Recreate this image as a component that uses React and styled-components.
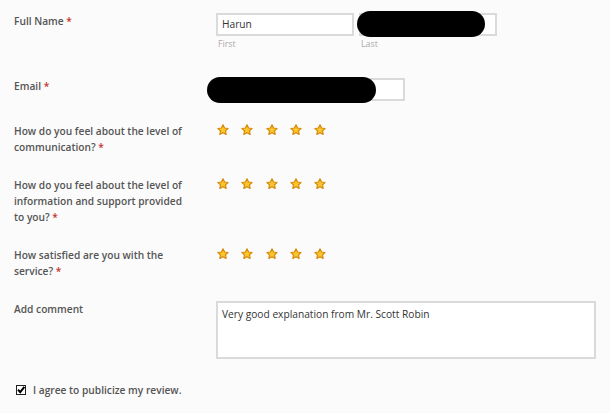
import React from "react";
import styled, { createGlobalStyle } from "styled-components";

const Global = createGlobalStyle`
  html, body { margin: 0; padding: 0; background: #fbfbfb; }
  body { font-family: "Open Sans", "Noto Sans", sans-serif; }
`;

const Form = styled.div`
  width: 610px;
  height: 413px;
  box-sizing: border-box;
  padding: 13px 0 0 14px;
  background: #fbfbfb;
  overflow: hidden;
`;

const Row = styled.div`
  display: grid;
  grid-template-columns: 202px 1fr;
  margin-bottom: ${(p) => p.$gap ?? 22}px;
`;

const Label = styled.div`
  font-size: 10.2px;
  font-weight: 600;
  line-height: 16px;
  color: #555;
  width: ${(p) => p.$w || "auto"};
`;

const Req = styled.span`
  color: #c9302c;
`;

const NameGroup = styled.div`
  display: flex;
  gap: 5px;
`;

const Field = styled.div`
  position: relative;
  display: flex;
  flex-direction: column;
`;

const Input = styled.div`
  box-sizing: border-box;
  width: ${(p) => p.$w}px;
  height: 23px;
  border: 2px solid #dadada;
  background: #fff;
  font-size: 10.2px;
  line-height: 19px;
  color: #333;
  padding-left: 4px;
`;

const Sub = styled.div`
  font-size: 8.8px;
  line-height: 12px;
  color: #aaa;
  padding: 2px 0 0 2px;
`;

const Redact = styled.div`
  position: absolute;
  left: ${(p) => p.$l}px;
  top: ${(p) => p.$t}px;
  width: ${(p) => p.$w}px;
  height: ${(p) => p.$h}px;
  background: #000;
  border-radius: ${(p) => p.$h / 2}px;
`;

const Stars = styled.div`
  display: flex;
  gap: 12.3px;
  padding: 1px 0 0 1px;
  height: 12px;
`;

const TextArea = styled.div`
  box-sizing: border-box;
  width: 380px;
  height: 58px;
  border: 2px solid #dadada;
  background: #fff;
  font-size: 10.2px;
  line-height: 16px;
  color: #333;
  padding: 3px 0 0 4px;
`;

const Agree = styled.label`
  display: flex;
  align-items: center;
  gap: 7px;
  padding-left: 2px;
  font-size: 10.2px;
  font-weight: 600;
  line-height: 16px;
  color: #555;
`;

const Box = styled.span`
  width: 10px;
  height: 10px;
  display: inline-flex;
`;

const Star = () => (
  <svg width="12" height="12" viewBox="0 0 24 24">
    <path
      d="M12 1.6l3.1 6.4 7 .95-5.1 4.85 1.3 6.95L12 17.4l-6.3 3.35 1.3-6.95-5.1-4.85 7-.95z"
      fill="#fbc62a"
      stroke="#d6890c"
      strokeWidth="2.4"
      strokeLinejoin="round"
    />
  </svg>
);

const Rating = () => (
  <Stars>
    {[0, 1, 2, 3, 4].map((i) => (
      <Star key={i} />
    ))}
  </Stars>
);

const Check = () => (
  <Box>
    <svg width="10" height="10" viewBox="0 0 10 10">
      <rect x="0.5" y="0.5" width="9" height="9" fill="#fff" stroke="#222" />
      <path d="M2 4.6l2.2 2.5L8.4 1.8" fill="none" stroke="#000" strokeWidth="2" />
    </svg>
  </Box>
);

export default function App() {
  return (
    <>
      <Global />
      <Form>
        <Row $gap={28}>
          <Label>
            Full Name <Req>*</Req>
          </Label>
          <NameGroup>
            <Field>
              <Input $w={138}>Harun</Input>
              <Sub>First</Sub>
            </Field>
            <Field>
              <Input $w={138} />
              <Sub>Last</Sub>
              <Redact $l={-2} $t={-2} $w={128} $h={26} />
            </Field>
          </NameGroup>
        </Row>
        <Row>
          <Label>
            Email <Req>*</Req>
          </Label>
          <Field>
            <Input $w={189} />
            <Redact $l={-9} $t={-1} $w={169} $h={26} />
          </Field>
        </Row>
        <Row>
          <Label $w="175px">
            How do you feel about the level of communication? <Req>*</Req>
          </Label>
          <Rating />
        </Row>
        <Row>
          <Label $w="180px">
            How do you feel about the level of information and support provided to you? <Req>*</Req>
          </Label>
          <Rating />
        </Row>
        <Row>
          <Label $w="160px">
            How satisfied are you with the service? <Req>*</Req>
          </Label>
          <Rating />
        </Row>
        <Row $gap={23}>
          <Label>Add comment</Label>
          <TextArea>Very good explanation from Mr. Scott Robin</TextArea>
        </Row>
        <Agree>
          <Check />I agree to publicize my review.
        </Agree>
      </Form>
    </>
  );
}
